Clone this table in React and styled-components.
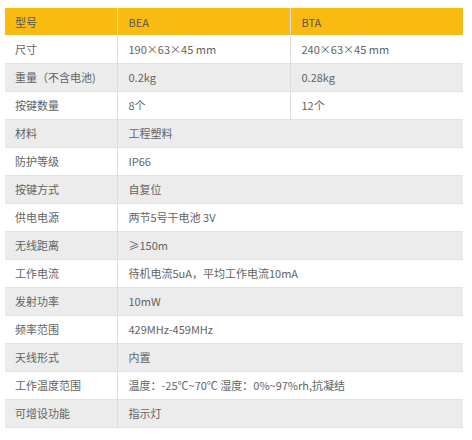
import React from "react";
import styled, { createGlobalStyle } from "styled-components";

const Global = createGlobalStyle`
  html, body { margin: 0; padding: 0; background: #fff; }
  body { font-family: "Noto Sans CJK SC", "Noto Sans", sans-serif; }
`;

const Wrap = styled.div`
  padding: 8px 9px 0 5px;
`;

const Table = styled.table`
  width: 458px;
  border-collapse: collapse;
  table-layout: fixed;
  font-size: 11px;
  color: #666;
`;

const HeadRow = styled.tr`
  background: #f9bb12;
  height: 27px;
`;

const Row = styled.tr`
  background: ${(p) => (p.$shade ? "#ececec" : "#fff")};
  height: 28px;
  border-bottom: 1px solid #e2e2e2;
`;

const Cell = styled.td`
  padding: 0 0 0 ${(p) => (p.$first ? 10 : 11)}px;
  border-left: ${(p) => (p.$first ? "none" : "1px solid #dcdcdc")};
  white-space: nowrap;
  vertical-align: middle;
  line-height: 16px;
  color: ${(p) => (p.$head ? "#555" : "#636363")};
`;

const rows = [
  ["尺寸", "190×63×45 mm", "240×63×45 mm"],
  ["重量（不含电池)", "0.2kg", "0.28kg"],
  ["按键数量", "8个", "12个"],
  ["材料", "工程塑料"],
  ["防护等级", "IP66"],
  ["按键方式", "自复位"],
  ["供电电源", "两节5号干电池 3V"],
  ["无线距离", "≥150m"],
  ["工作电流", "待机电流5uA，平均工作电流10mA"],
  ["发射功率", "10mW"],
  ["频率范围", "429MHz-459MHz"],
  ["天线形式", "内置"],
  ["工作温度范围", "温度：-25℃~70℃ 湿度：0%~97%rh,抗凝结"],
  ["可增设功能", "指示灯"],
];

export default function App() {
  return (
    <Wrap>
      <Global />
      <Table>
        <colgroup>
          <col style={{ width: 112 }} />
          <col style={{ width: 173 }} />
          <col />
        </colgroup>
        <tbody>
          <HeadRow>
            <Cell $first $head>型号</Cell>
            <Cell $head>BEA</Cell>
            <Cell $head>BTA</Cell>
          </HeadRow>
          {rows.map((r, i) => (
            <Row key={r[0]} $shade={i % 2 === 1}>
              <Cell $first>{r[0]}</Cell>
              {r.length === 3 ? (
                <>
                  <Cell>{r[1]}</Cell>
                  <Cell>{r[2]}</Cell>
                </>
              ) : (
                <Cell colSpan={2}>{r[1]}</Cell>
              )}
            </Row>
          ))}
        </tbody>
      </Table>
    </Wrap>
  );
}
